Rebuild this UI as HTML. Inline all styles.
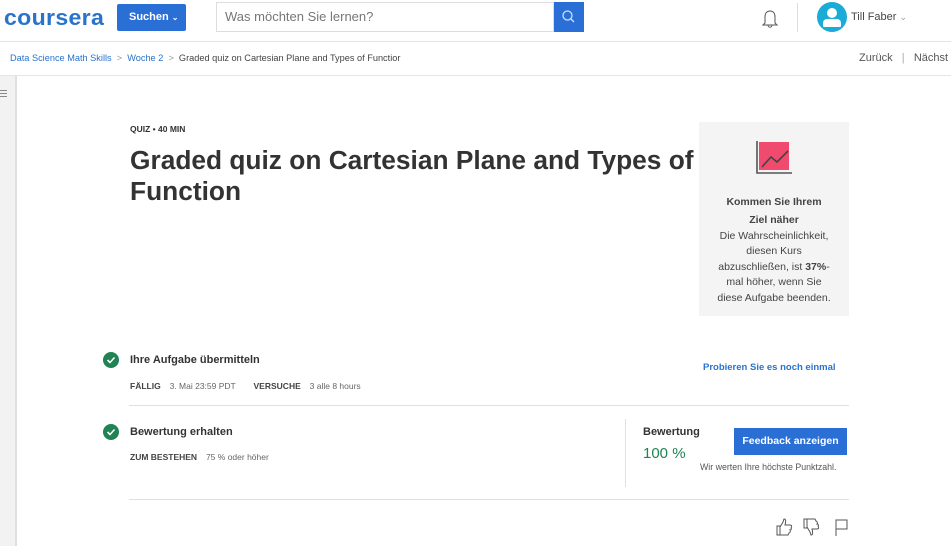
<!DOCTYPE html>
<html><head><meta charset="utf-8"><style>
*{margin:0;padding:0;box-sizing:border-box}
body{width:951px;height:546px;overflow:hidden;background:#fff;font-family:"Liberation Sans",sans-serif;color:#333;position:relative}
.abs{position:absolute}
.hdr{left:0;top:0;width:951px;height:42px;border-bottom:1px solid #e5e5e5}
.crumb{left:0;top:42px;width:951px;height:34px;border-bottom:1px solid #e5e5e5;font-size:10px}
.side{left:0;top:76px;width:17px;height:470px;background:#f2f2f2;border-right:2px solid #e0e0e0}
.blue{color:#2a73cc}
.lbl{font-weight:bold;font-size:8.5px;color:#444}
.sm{font-size:8.5px;color:#666}
.check{width:16px;height:16px;border-radius:50%;background:#1f8354}
</style></head><body>
<div class="abs hdr"></div>
<div class="abs" style="left:4px;top:5px;font-size:22px;font-weight:bold;color:#2a73cc;letter-spacing:0.3px;transform:scaleX(1.05);transform-origin:left">coursera</div>
<div class="abs" style="left:117px;top:4px;width:69px;height:27px;background:#2a6fd6;border-radius:2px;color:#fff;font-size:11px;font-weight:bold;line-height:27px;padding-left:12px">Suchen <span style="font-size:8px">&#8964;</span></div>
<div class="abs" style="left:216px;top:2px;width:338px;height:30px;border:1px solid #ddd;font-size:13px;color:#777;line-height:28px;padding-left:8px">Was möchten Sie lernen?</div>
<div class="abs" style="left:554px;top:2px;width:30px;height:30px;background:#2a6fd6">
<svg width="30" height="30"><circle cx="13.5" cy="13.5" r="4.5" fill="none" stroke="#cfe0ff" stroke-width="1.3"/><line x1="17" y1="17" x2="20" y2="20" stroke="#cfe0ff" stroke-width="1.3"/></svg></div>
<svg class="abs" style="left:760px;top:8px" width="20" height="22"><path d="M5 15 L5 9 C5 5 7 3 10 3 C13 3 15 5 15 9 L15 15 L17 17 L3 17 Z M8 17 C8 20 12 20 12 17" fill="none" stroke="#555" stroke-width="1"/></svg>
<div class="abs" style="left:797px;top:3px;width:1px;height:29px;background:#ddd"></div>
<div class="abs" style="left:817px;top:2px;width:30px;height:30px;border-radius:50%;background:#1aabd6;overflow:hidden">
<div class="abs" style="left:10px;top:6px;width:10px;height:10px;border-radius:50%;background:#fff"></div>
<div class="abs" style="left:6px;top:17px;width:18px;height:8px;border-radius:4px 4px 1px 1px;background:#fff"></div></div>
<div class="abs" style="left:851px;top:11px;font-size:11px;color:#444">Till Faber <span style="color:#999;font-size:9px">&#8964;</span></div>
<div class="abs crumb"></div>
<div class="abs" style="left:10px;top:53px;font-size:9.2px;color:#444;white-space:nowrap"><span class="blue">Data Science Math Skills</span> <span style="color:#999">&nbsp;&gt;&nbsp;</span> <span class="blue">Woche 2</span> <span style="color:#999">&nbsp;&gt;&nbsp;</span> Graded quiz on Cartesian Plane and Types of Functior</div>
<div class="abs" style="left:859px;top:52px;font-size:11px;color:#555;white-space:nowrap">Zurück &nbsp;&nbsp;<span style="color:#aaa">|</span>&nbsp;&nbsp; Nächst</div>
<div class="abs side"><div style="margin:14px 0 0 0;width:7px;border-top:1px solid #888;height:3px"></div><div style="width:7px;border-top:1px solid #888;height:3px"></div><div style="width:7px;border-top:1px solid #888"></div></div>
<div class="abs" style="left:130px;top:124px;font-size:8.5px;font-weight:bold;color:#333">QUIZ • 40 MIN</div>
<div class="abs" style="left:130px;top:145px;width:590px;font-size:26.3px;font-weight:bold;line-height:31px;color:#333">Graded quiz on Cartesian Plane and Types of Function</div>
<div class="abs" style="left:699px;top:122px;width:150px;height:194px;background:#f4f4f4;text-align:center;font-size:10.5px;line-height:15.5px;color:#444">
<svg style="margin-top:17px" width="40" height="38"><rect x="5" y="3" width="30" height="28" fill="#f04b6e"/><polyline points="8,28 17,18 23,23 34,12" fill="none" stroke="#444" stroke-width="1.6"/><polyline points="3,2 3,34 38,34" fill="none" stroke="#555" stroke-width="1.6"/></svg>
<div style="font-weight:bold;margin-top:10px;line-height:18px">Kommen Sie Ihrem<br>Ziel näher</div>
<div>Die Wahrscheinlichkeit,<br>diesen Kurs<br>abzuschließen, ist <b>37%</b>-<br>mal höher, wenn Sie<br>diese Aufgabe beenden.</div></div>
<div class="abs check" style="left:103px;top:352px"><svg width="16" height="16"><polyline points="4.5,8 7,10.5 11.5,5.5" fill="none" stroke="#fff" stroke-width="1.6"/></svg></div>
<div class="abs" style="left:130px;top:354px;font-size:11px;font-weight:bold;color:#333">Ihre Aufgabe übermitteln</div>
<div class="abs" style="left:130px;top:376px;white-space:nowrap"><span class="lbl">FÄLLIG</span>&nbsp; <span class="sm">3. Mai 23:59 PDT</span>&nbsp;&nbsp;&nbsp; <span class="lbl">VERSUCHE</span>&nbsp; <span class="sm">3 alle 8 hours</span></div>
<div class="abs blue" style="left:703px;top:362px;font-size:9.5px;font-weight:bold">Probieren Sie es noch einmal</div>
<div class="abs" style="left:129px;top:405px;width:720px;height:1px;background:#e0e0e0"></div>
<div class="abs check" style="left:103px;top:424px"><svg width="16" height="16"><polyline points="4.5,8 7,10.5 11.5,5.5" fill="none" stroke="#fff" stroke-width="1.6"/></svg></div>
<div class="abs" style="left:130px;top:426px;font-size:11px;font-weight:bold;color:#333">Bewertung erhalten</div>
<div class="abs" style="left:130px;top:447px;white-space:nowrap"><span class="lbl">ZUM BESTEHEN</span>&nbsp; <span class="sm">75 % oder höher</span></div>
<div class="abs" style="left:625px;top:419px;width:1px;height:68px;background:#e0e0e0"></div>
<div class="abs" style="left:643px;top:426px;font-size:11px;font-weight:bold;color:#333">Bewertung</div>
<div class="abs" style="left:643px;top:445px;font-size:15px;color:#1f8354">100 %</div>
<div class="abs" style="left:734px;top:428px;width:113px;height:27px;background:#2a6fd6;color:#fff;font-size:10.5px;font-weight:bold;text-align:center;line-height:26px">Feedback anzeigen</div>
<div class="abs" style="left:700px;top:462px;font-size:8.8px;color:#555;white-space:nowrap">Wir werten Ihre höchste Punktzahl.</div>
<div class="abs" style="left:129px;top:499px;width:720px;height:1px;background:#e0e0e0"></div>
<svg class="abs" style="left:775px;top:518px" width="80" height="20">
<path d="M2 8 L5 8 L5 17 L2 17 Z M5 9 L8 4 L9 1 C11 1 11 3 10 7 L15 7 C17 7 17 9 16 10 C17 11 16 12 15 12 C16 13 15 15 14 15 L13 17 L5 17" fill="none" stroke="#555" stroke-width="1"/>
<path d="M29 10 L32 10 L32 1 L29 1 Z M32 9 L35 14 L36 17 C38 17 38 15 37 11 L42 11 C44 11 44 9 43 8 C44 7 43 6 42 6 C43 5 42 3 41 3 L40 1 L32 1" fill="none" stroke="#555" stroke-width="1"/>
<path d="M61 18 L61 2 L72 2 L72 11 L61 11" fill="none" stroke="#555" stroke-width="1"/>
</svg>
</body></html>
